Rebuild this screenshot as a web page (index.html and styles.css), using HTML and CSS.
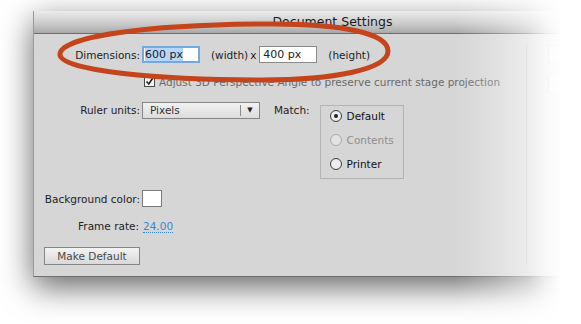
FILE: index.html
```html
<!DOCTYPE html>
<html>
<head>
<meta charset="utf-8">
<link rel="stylesheet" href="styles.css">
</head>
<body>
<div class="window">
  <div class="titlebar">Document Settings</div>
  <div class="content">
    <div class="main">
      <div class="row dims">
        <span class="lbl">Dimensions:</span>
        <span class="field focus"><span class="sel">600 px</span></span>
        <span class="unit">(width)</span><span class="times">x</span>
        <span class="field second">400 px</span>
        <span class="unit">(height)</span>
      </div>
      <div class="row check">
        <span class="lbl"></span>
        <span class="checkbox"><svg width="9" height="9" viewBox="0 0 9 9"><path d="M1.5 4.5 L3.8 7 L7.8 1" fill="none" stroke="#222" stroke-width="1.6"/></svg></span>
        <span class="note">Adjust 3D Perspective Angle to preserve current stage projection</span>
      </div>
      <div class="row ruler">
        <span class="lbl tall">Ruler units:</span>
        <span class="select"><span class="sel-text">Pixels</span><span class="arrow">&#9660;</span></span>
        <span class="match">Match:</span>
        <div class="radios">
          <div class="radio on"><span class="dot"></span><span>Default</span></div>
          <div class="radio off"><span class="dot"></span><span>Contents</span></div>
          <div class="radio"><span class="dot"></span><span>Printer</span></div>
        </div>
      </div>
      <div class="row bg">
        <span class="lbl">Background color:</span>
        <span class="swatch"></span>
      </div>
      <div class="row fps">
        <span class="lbl">Frame rate:</span>
        <span class="link">24.00</span>
      </div>
      <div class="row btnrow">
        <span class="button">Make Default</span>
      </div>
    </div>
    <div class="side">
      <div class="box"></div>
      <div class="box two"></div>
    </div>
  </div>
</div>
<svg class="ring" width="581" height="324" viewBox="0 0 581 324">
  <path d="M60 55 C58 36 150 25 262 24 C345 23 388 34 388 51 C388 69 335 80 262 80 C160 80 62 71 60 55 Z" fill="none" stroke="#c4441c" stroke-width="5"/>
</svg>
<div class="fade"></div>
</body>
</html>
```
FILE: styles.css
```css
html, body {
  margin: 0;
  padding: 0;
  background: #ffffff;
  overflow: hidden;
}
body {
  width: 581px;
  height: 324px;
  position: relative;
  font-family: "DejaVu Sans", sans-serif;
  font-size: 10.5px;
  color: #222;
}
.window {
  margin: 11px 0 0 33px;
  width: 547px;
  background: #d6d6d6;
  border-left: 1px solid #9a9a9a;
  border-bottom: 1px solid #6f6f6f;
  box-shadow: 0 10px 30px rgba(0,0,0,0.6);
}
.titlebar {
  height: 22px;
  line-height: 22px;
  padding-left: 50px;
  border-bottom: 1px solid #6c6c6c;
  background: linear-gradient(#ececec, #c9c9c9 60%, #a9a9a9);
  text-align: center;
  font-size: 12.5px;
  color: #1a1a1a;
}
.content {
  display: flex;
}
.main {
  width: 485px;
  padding: 12px 0 11px 7px;
}
.row {
  display: flex;
  align-items: center;
}
.lbl {
  width: 99px;
  text-align: right;
  flex: none;
}
.dims { height: 17px; }
.field {
  box-sizing: border-box;
  width: 58px;
  height: 17px;
  margin-left: 2px;
  background: #fff;
  border: 1px solid #8a8a8a;
  padding-left: 3px;
  line-height: 15px;
  font-size: 11px;
  color: #222;
}
.field.focus {
  border: 2px solid #74a9df;
  padding-left: 1px;
  line-height: 13px;
}
.sel { background: #b6d5fb; }
.field.second { margin-left: 3px; }
.unit { margin-left: 11px; }
.times { margin-left: 2px; }
.check { margin-top: 12px; height: 13px; }
.checkbox {
  box-sizing: border-box;
  width: 11px;
  height: 11px;
  margin-left: 4px;
  border: 1px solid #4a4a4a;
  background: #f4f4f4;
  display: flex;
  align-items: center;
  justify-content: center;
}
.note { margin-left: 4px; color: #6a6a6a; }
.ruler { margin-top: 14px; align-items: flex-start; }
.tall { line-height: 17px; }
.select {
  box-sizing: border-box;
  width: 118px;
  height: 17px;
  margin-left: 2px;
  border: 1px solid #858585;
  background: linear-gradient(#f2f2f2, #dcdcdc);
  display: flex;
  line-height: 15px;
  color: #333;
}
.sel-text { flex: 1; padding-left: 7px; }
.arrow {
  width: 18px;
  border-left: 1px solid #8a8a8a;
  margin: 2px 0;
  line-height: 11px;
  font-size: 7px;
  text-align: center;
  color: #222;
}
.match { margin-left: 14px; line-height: 17px; }
.radios {
  box-sizing: border-box;
  width: 84px;
  height: 74px;
  margin: 3px 0 0 10px;
  border: 1px solid #b4b4b4;
  padding: 3px 0 0 9px;
}
.radio {
  display: flex;
  align-items: center;
  height: 14px;
  margin-bottom: 10px;
  color: #111;
}
.radio .dot {
  box-sizing: border-box;
  width: 12px;
  height: 12px;
  border: 1px solid #3a3a3a;
  border-radius: 50%;
  margin-right: 5px;
  background: #ededed;
  display: flex;
  align-items: center;
  justify-content: center;
}
.radio.on .dot::after {
  content: "";
  width: 4px;
  height: 4px;
  border-radius: 50%;
  background: #222;
}
.radio.off { color: #8e8e8e; }
.radio.off .dot { border-color: #a8a8a8; background: #e2e2e2; }
.bg { margin-top: 11px; height: 17px; }
.swatch {
  box-sizing: border-box;
  width: 20px;
  height: 17px;
  margin-left: 2px;
  background: #fff;
  border: 1px solid #7a7a7a;
}
.fps { margin-top: 11px; height: 16px; }
.fps .lbl { width: 98px; }
.link {
  margin-left: 4px;
  color: #3b87cc;
  border-bottom: 1px dotted #3b87cc;
  line-height: 12px;
}
.btnrow { margin-top: 13px; }
.button {
  box-sizing: border-box;
  width: 96px;
  height: 18px;
  margin-left: 3px;
  border: 1px solid #858585;
  background: linear-gradient(#f3f3f3, #d9d9d9);
  text-align: center;
  line-height: 16px;
  color: #4a4a4a;
}
.side {
  flex: 1;
  margin: 10px 0 11px 0;
  border-left: 1px solid #c2c2c2;
  padding: 1px 0 0 21px;
}
.box {
  width: 30px;
  height: 18px;
  border: 1px solid #b0b0b0;
  border-right: 0;
  background: #e6e6e6;
  box-sizing: border-box;
}
.box.two { margin-top: 12px; }
.ring {
  position: absolute;
  left: 0;
  top: 0;
}
.fade {
  position: absolute;
  left: 0;
  top: 0;
  width: 581px;
  height: 324px;
  background: linear-gradient(to right,
    rgba(255,255,255,0) 455px,
    rgba(255,255,255,0.25) 495px,
    rgba(255,255,255,0.55) 527px,
    rgba(255,255,255,0.85) 546px,
    rgba(255,255,255,1) 562px);
}
```
